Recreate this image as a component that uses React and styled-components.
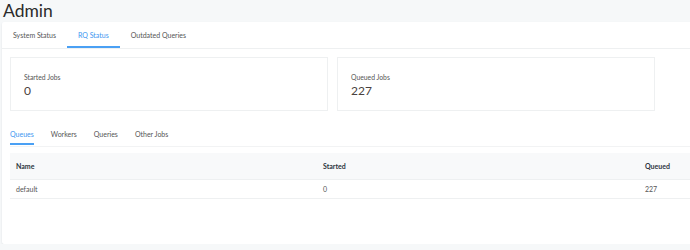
import React, { useState } from 'react';
import styled, { createGlobalStyle } from 'styled-components';

const GlobalStyle = createGlobalStyle`
  html, body {
    margin: 0;
    padding: 0;
    background: #f6f8f9;
    overflow: hidden;
    font-family: Lato, "Noto Sans", sans-serif;
  }
`

const Page = styled.div`
  width: 760px;
  padding: 0 0 0 2px;
`

const Title = styled.h1`
  margin: 0;
  height: 22px;
  box-sizing: border-box;
  padding: 3px 0 0 1px;
  font-size: 17.5px;
  line-height: 16px;
  font-weight: 400;
  color: #2b2b2b;
`

const Card = styled.div`
  background: #fff;
  min-height: 222px;
  border-radius: 2px;
  box-shadow: 0 1px 2px rgba(40, 60, 80, 0.12);
`

const TopTabs = styled.div`
  display: flex;
  height: 26px;
  border-bottom: 1px solid #eef0f1;
`

const TopTab = styled.div`
  padding: 0 11px;
  font-size: 7px;
  line-height: 26px;
  color: ${p => (p.active ? '#4096f0' : '#555')};
  box-shadow: ${p => (p.active ? 'inset 0 -2px 0 #4aa0f4' : 'none')};
  cursor: pointer;
`

const Content = styled.div`
  padding: 8px 0 0 8px;
`

const Counters = styled.div`
  display: grid;
  grid-template-columns: 318px 318px;
  gap: 9px;
`

const Counter = styled.div`
  height: 54px;
  box-sizing: border-box;
  border: 1px solid #eef0f1;
  padding: 14px 13px 0;
`

const CounterLabel = styled.div`
  font-size: 6.8px;
  line-height: 10px;
  color: #555;
`

const CounterValue = styled.div`
  font-size: 12px;
  line-height: 18px;
  color: #4a4240;
`

const SubTabs = styled.div`
  display: flex;
  gap: 17px;
  margin-top: 15px;
  height: 20px;
  border-bottom: 1px solid #f2f3f4;
`

const SubTab = styled.div`
  font-size: 7px;
  line-height: 16px;
  height: 19px;
  box-sizing: border-box;
  color: ${p => (p.active ? '#4096f0' : '#555')};
  border-bottom: 2px solid ${p => (p.active ? '#4aa0f4' : 'transparent')};
  cursor: pointer;
`

const Table = styled.div`
  margin-top: 6px;
`

const Row = styled.div`
  display: grid;
  grid-template-columns: 307px 322px 1fr;
  height: ${p => (p.head ? '26px' : '18px')};
  align-items: center;
  background: ${p => (p.head ? '#f8f9fa' : '#fff')};
  border-bottom: 1px solid #eef0f1;
`

const Cell = styled.div`
  padding-left: 6px;
  font-size: 7px;
  color: ${p => (p.head ? '#2d3440' : '#555')};
  font-weight: ${p => (p.head ? 700 : 400)};
`

const rows = [{ name: 'default', started: 0, queued: 227 }]

export default function App() {
  const [tab, setTab] = useState('RQ Status')
  const [sub, setSub] = useState('Queues')

  return (
    <Page>
      <GlobalStyle />
      <Title>Admin</Title>
      <Card>
        <TopTabs>
          {['System Status', 'RQ Status', 'Outdated Queries'].map(t => (
            <TopTab key={t} active={t === tab} onClick={() => setTab(t)}>{t}</TopTab>
          ))}
        </TopTabs>
        <Content>
          <Counters>
            <Counter>
              <CounterLabel>Started Jobs</CounterLabel>
              <CounterValue>0</CounterValue>
            </Counter>
            <Counter>
              <CounterLabel>Queued Jobs</CounterLabel>
              <CounterValue>227</CounterValue>
            </Counter>
          </Counters>
          <SubTabs>
            {['Queues', 'Workers', 'Queries', 'Other Jobs'].map(t => (
              <SubTab key={t} active={t === sub} onClick={() => setSub(t)}>{t}</SubTab>
            ))}
          </SubTabs>
          <Table>
            <Row head>
              <Cell head>Name</Cell>
              <Cell head>Started</Cell>
              <Cell head>Queued</Cell>
            </Row>
            {rows.map(r => (
              <Row key={r.name}>
                <Cell>{r.name}</Cell>
                <Cell>{r.started}</Cell>
                <Cell>{r.queued}</Cell>
              </Row>
            ))}
          </Table>
        </Content>
      </Card>
    </Page>
  );
}
